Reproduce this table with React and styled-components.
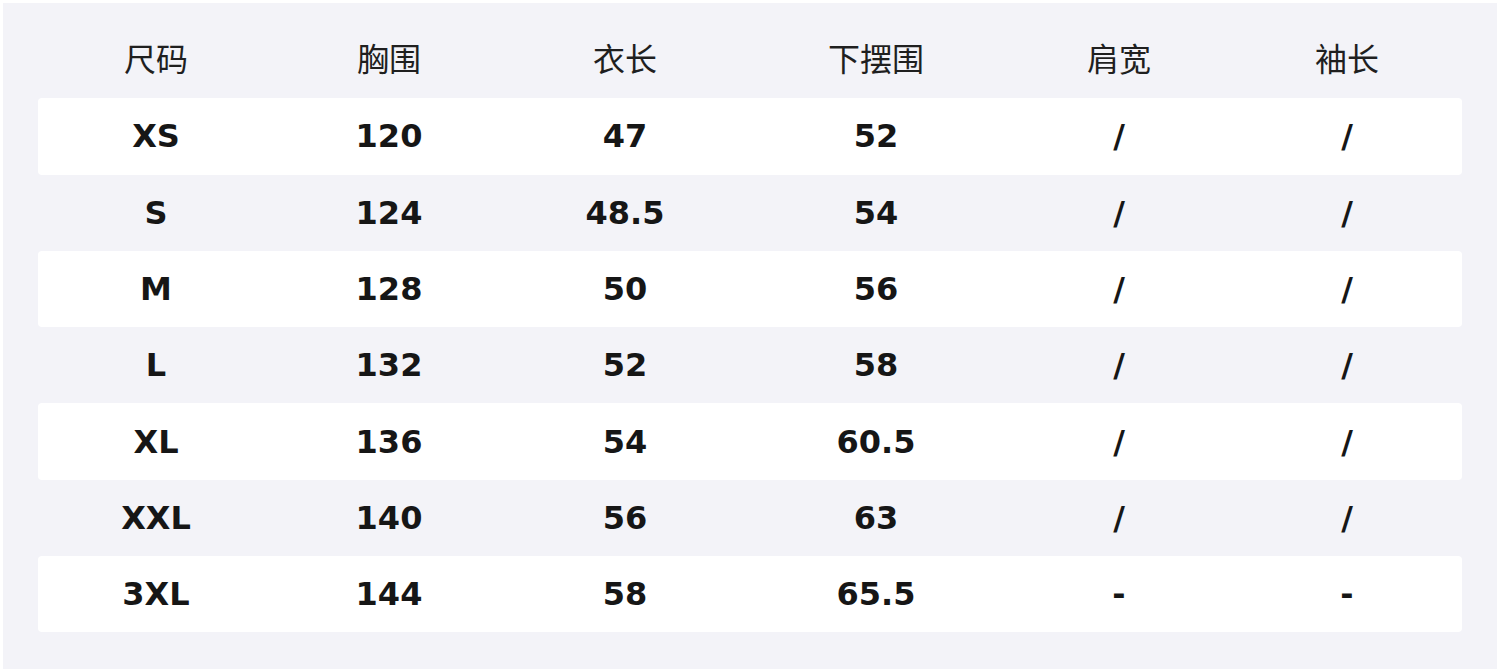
import React from "react";
import styled, { createGlobalStyle } from "styled-components";

const GlobalStyle = createGlobalStyle`
  html, body {
    margin: 0;
    padding: 0;
    background: #ffffff;
  }
`;

const Panel = styled.div`
  box-sizing: border-box;
  margin: 3px;
  width: 1494px;
  height: 666px;
  padding: 19px 35px 36px 35px;
  background-color: #f3f3f8;
  font-family: "DejaVu Sans", "Noto Sans CJK SC", sans-serif;
`;

const Row = styled.div`
  display: grid;
  grid-template-columns: 236fr 230fr 242fr 260fr 226fr 230fr;
  align-items: center;
  height: 76.3px;
  border-radius: 4px;
  background-color: ${(props) => (props.$white ? "#ffffff" : "transparent")};
`;

const HeadCell = styled.div`
  text-align: center;
  padding-bottom: 6px;
  font-family: "Noto Sans CJK SC", sans-serif;
  font-size: 32px;
  font-weight: 400;
  color: #1f1f1f;
`;

const Cell = styled.div`
  text-align: center;
  font-size: 32px;
  font-weight: 700;
  color: #161616;
`;

const headers = ["尺码", "胸围", "衣长", "下摆围", "肩宽", "袖长"];

const rows = [
  ["XS", "120", "47", "52", "/", "/"],
  ["S", "124", "48.5", "54", "/", "/"],
  ["M", "128", "50", "56", "/", "/"],
  ["L", "132", "52", "58", "/", "/"],
  ["XL", "136", "54", "60.5", "/", "/"],
  ["XXL", "140", "56", "63", "/", "/"],
  ["3XL", "144", "58", "65.5", "-", "-"],
];

export default function App() {
  return (
    <>
      <GlobalStyle />
      <Panel>
        <Row>
          {headers.map((h) => (
            <HeadCell key={h}>{h}</HeadCell>
          ))}
        </Row>
        {rows.map((r, i) => (
          <Row key={r[0]} $white={i % 2 === 0}>
            {r.map((v, j) => (
              <Cell key={j}>{v}</Cell>
            ))}
          </Row>
        ))}
      </Panel>
    </>
  );
}
